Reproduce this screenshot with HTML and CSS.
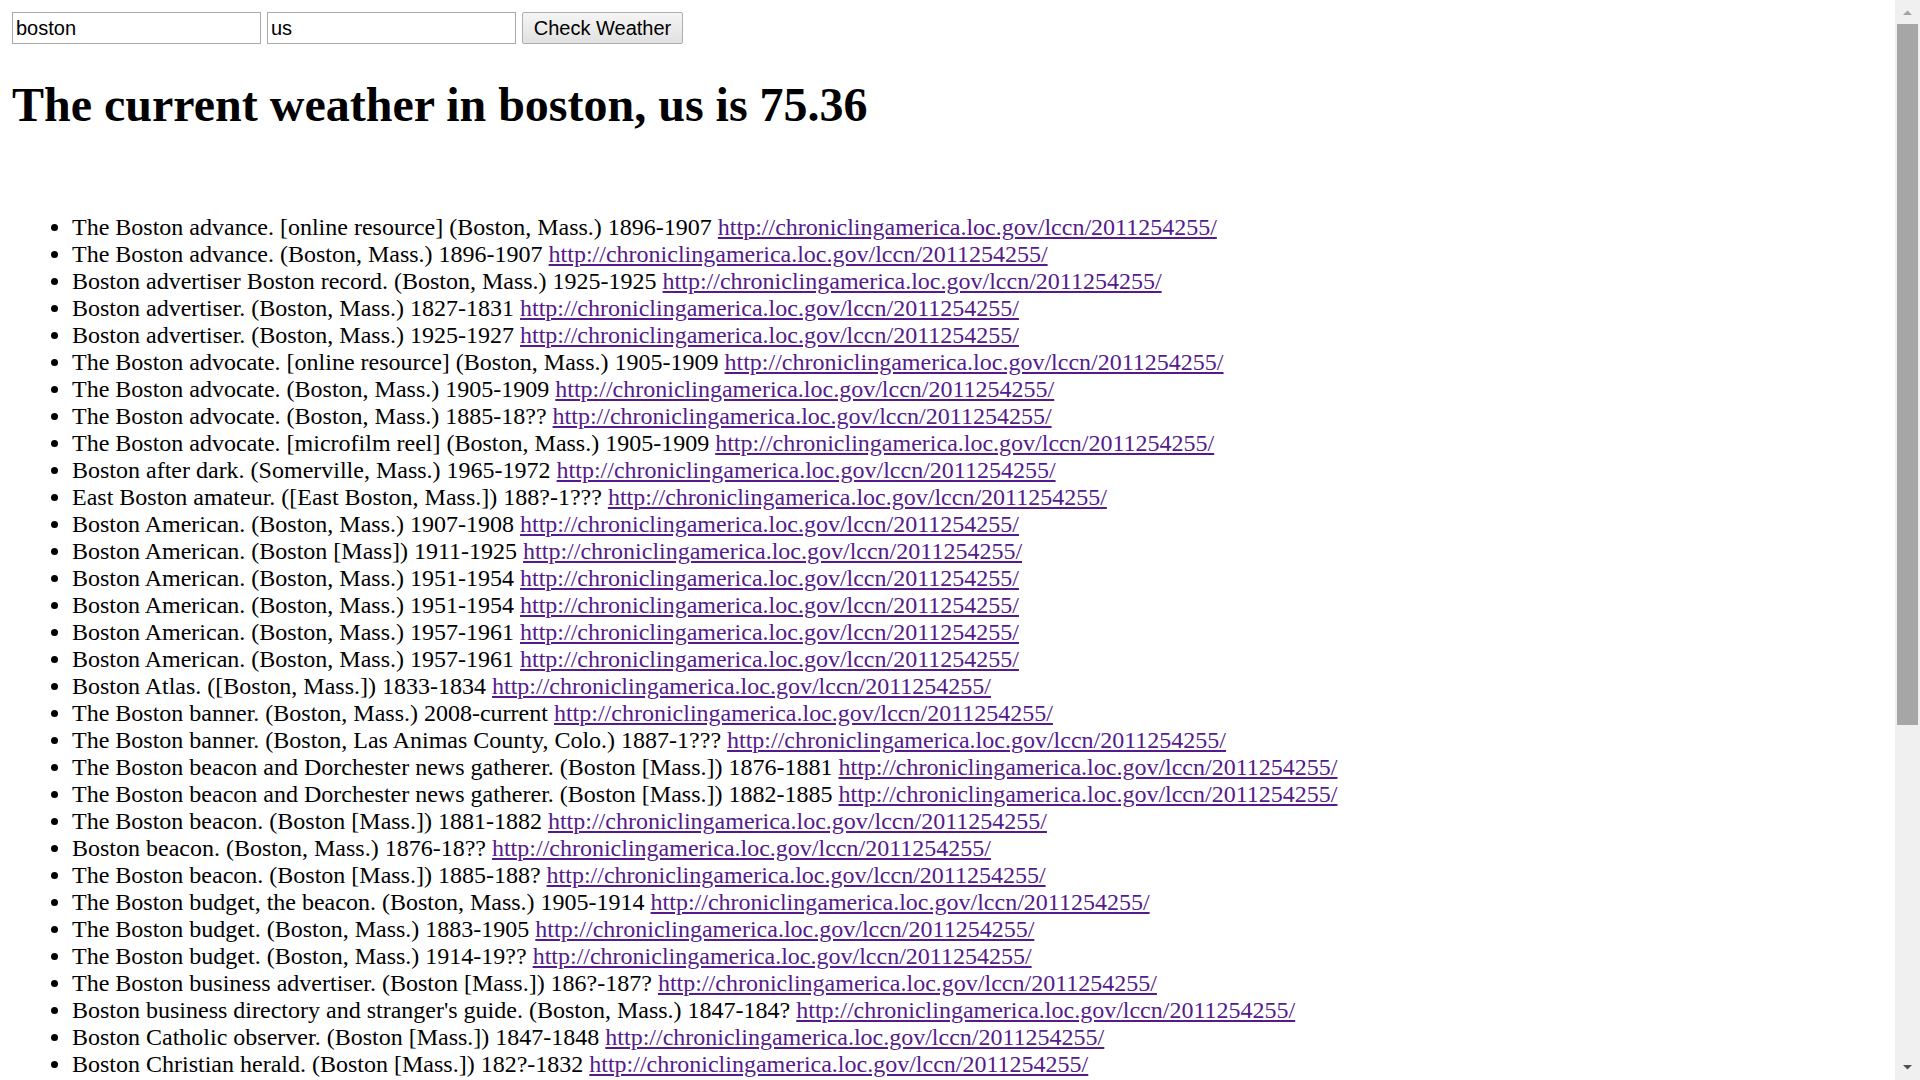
FILE: index.html
```html
<!DOCTYPE html>
<html lang="en">
<head>
<meta charset="utf-8">
<title>Weather</title>
<link rel="stylesheet" href="styles.css">
</head>
<body>
<form class="search-form">
  <input class="field" type="text" value="boston">
  <input class="field" type="text" value="us">
  <button class="btn" type="button">Check Weather</button>
</form>
<h1 class="title">The current weather in boston, us is 75.36</h1>
<ul class="results">
  <li>The Boston advance. [online resource] (Boston, Mass.) 1896-1907 <a class="link" href="#">http://chroniclingamerica.loc.gov/lccn/2011254255/</a></li>
  <li>The Boston advance. (Boston, Mass.) 1896-1907 <a class="link" href="#">http://chroniclingamerica.loc.gov/lccn/2011254255/</a></li>
  <li>Boston advertiser Boston record. (Boston, Mass.) 1925-1925 <a class="link" href="#">http://chroniclingamerica.loc.gov/lccn/2011254255/</a></li>
  <li>Boston advertiser. (Boston, Mass.) 1827-1831 <a class="link" href="#">http://chroniclingamerica.loc.gov/lccn/2011254255/</a></li>
  <li>Boston advertiser. (Boston, Mass.) 1925-1927 <a class="link" href="#">http://chroniclingamerica.loc.gov/lccn/2011254255/</a></li>
  <li>The Boston advocate. [online resource] (Boston, Mass.) 1905-1909 <a class="link" href="#">http://chroniclingamerica.loc.gov/lccn/2011254255/</a></li>
  <li>The Boston advocate. (Boston, Mass.) 1905-1909 <a class="link" href="#">http://chroniclingamerica.loc.gov/lccn/2011254255/</a></li>
  <li>The Boston advocate. (Boston, Mass.) 1885-18?? <a class="link" href="#">http://chroniclingamerica.loc.gov/lccn/2011254255/</a></li>
  <li>The Boston advocate. [microfilm reel] (Boston, Mass.) 1905-1909 <a class="link" href="#">http://chroniclingamerica.loc.gov/lccn/2011254255/</a></li>
  <li>Boston after dark. (Somerville, Mass.) 1965-1972 <a class="link" href="#">http://chroniclingamerica.loc.gov/lccn/2011254255/</a></li>
  <li>East Boston amateur. ([East Boston, Mass.]) 188?-1??? <a class="link" href="#">http://chroniclingamerica.loc.gov/lccn/2011254255/</a></li>
  <li>Boston American. (Boston, Mass.) 1907-1908 <a class="link" href="#">http://chroniclingamerica.loc.gov/lccn/2011254255/</a></li>
  <li>Boston American. (Boston [Mass]) 1911-1925 <a class="link" href="#">http://chroniclingamerica.loc.gov/lccn/2011254255/</a></li>
  <li>Boston American. (Boston, Mass.) 1951-1954 <a class="link" href="#">http://chroniclingamerica.loc.gov/lccn/2011254255/</a></li>
  <li>Boston American. (Boston, Mass.) 1951-1954 <a class="link" href="#">http://chroniclingamerica.loc.gov/lccn/2011254255/</a></li>
  <li>Boston American. (Boston, Mass.) 1957-1961 <a class="link" href="#">http://chroniclingamerica.loc.gov/lccn/2011254255/</a></li>
  <li>Boston American. (Boston, Mass.) 1957-1961 <a class="link" href="#">http://chroniclingamerica.loc.gov/lccn/2011254255/</a></li>
  <li>Boston Atlas. ([Boston, Mass.]) 1833-1834 <a class="link" href="#">http://chroniclingamerica.loc.gov/lccn/2011254255/</a></li>
  <li>The Boston banner. (Boston, Mass.) 2008-current <a class="link" href="#">http://chroniclingamerica.loc.gov/lccn/2011254255/</a></li>
  <li>The Boston banner. (Boston, Las Animas County, Colo.) 1887-1??? <a class="link" href="#">http://chroniclingamerica.loc.gov/lccn/2011254255/</a></li>
  <li>The Boston beacon and Dorchester news gatherer. (Boston [Mass.]) 1876-1881 <a class="link" href="#">http://chroniclingamerica.loc.gov/lccn/2011254255/</a></li>
  <li>The Boston beacon and Dorchester news gatherer. (Boston [Mass.]) 1882-1885 <a class="link" href="#">http://chroniclingamerica.loc.gov/lccn/2011254255/</a></li>
  <li>The Boston beacon. (Boston [Mass.]) 1881-1882 <a class="link" href="#">http://chroniclingamerica.loc.gov/lccn/2011254255/</a></li>
  <li>Boston beacon. (Boston, Mass.) 1876-18?? <a class="link" href="#">http://chroniclingamerica.loc.gov/lccn/2011254255/</a></li>
  <li>The Boston beacon. (Boston [Mass.]) 1885-188? <a class="link" href="#">http://chroniclingamerica.loc.gov/lccn/2011254255/</a></li>
  <li>The Boston budget, the beacon. (Boston, Mass.) 1905-1914 <a class="link" href="#">http://chroniclingamerica.loc.gov/lccn/2011254255/</a></li>
  <li>The Boston budget. (Boston, Mass.) 1883-1905 <a class="link" href="#">http://chroniclingamerica.loc.gov/lccn/2011254255/</a></li>
  <li>The Boston budget. (Boston, Mass.) 1914-19?? <a class="link" href="#">http://chroniclingamerica.loc.gov/lccn/2011254255/</a></li>
  <li>The Boston business advertiser. (Boston [Mass.]) 186?-187? <a class="link" href="#">http://chroniclingamerica.loc.gov/lccn/2011254255/</a></li>
  <li>Boston business directory and stranger's guide. (Boston, Mass.) 1847-184? <a class="link" href="#">http://chroniclingamerica.loc.gov/lccn/2011254255/</a></li>
  <li>Boston Catholic observer. (Boston [Mass.]) 1847-1848 <a class="link" href="#">http://chroniclingamerica.loc.gov/lccn/2011254255/</a></li>
  <li>Boston Christian herald. (Boston [Mass.]) 182?-1832 <a class="link" href="#">http://chroniclingamerica.loc.gov/lccn/2011254255/</a></li>
</ul>
<div class="scrollbar" aria-hidden="true">
  <div class="sb-button">
    <svg width="25" height="24" viewBox="0 0 25 24"><path d="M8 15 L12.5 10.5 L17 15 Z" fill="#a3a3a3"/></svg>
  </div>
  <div class="sb-track">
    <div class="sb-thumb"></div>
  </div>
  <div class="sb-button">
    <svg width="25" height="24" viewBox="0 0 25 24"><path d="M8 9 L12.5 13.5 L17 9 Z" fill="#505050"/></svg>
  </div>
</div>
</body>
</html>
```

FILE: styles.css
```css
html {
  background: #fff;
}

body {
  margin: 12px;
  font-family: "Liberation Serif", "Times New Roman", serif;
  font-size: 24px;
  color: #000;
}

.search-form {
  display: flex;
  align-items: flex-start;
  gap: 6px;
  height: 33px;
  margin: 0;
}

.field {
  box-sizing: border-box;
  width: 249px;
  height: 32px;
  margin: 0;
  padding: 0 3px;
  border: 1px solid #a9a9a9;
  border-radius: 0;
  background: #fff;
  color: #000;
  font-family: "Liberation Sans", Arial, sans-serif;
  font-size: 20px;
  outline: none;
}

.btn {
  box-sizing: border-box;
  width: 161px;
  height: 32px;
  margin: 0;
  padding: 0;
  border: 1px solid #adadad;
  border-radius: 2px;
  background: linear-gradient(#f5f5f5, #e1e1e1);
  color: #000;
  font-family: "Liberation Sans", Arial, sans-serif;
  font-size: 20px;
}

.title {
  margin: 32px 0;
  font-size: 48px;
  font-weight: bold;
  line-height: 55px;
}

.results {
  margin: 82px 0 24px;
  padding-left: 60px;
  padding-right: 25px;
  list-style: disc;
}

.results li {
  line-height: 27px;
}

.link {
  color: #551a8b;
  text-decoration: underline;
}

.scrollbar {
  position: fixed;
  top: 0;
  right: 0;
  width: 25px;
  height: 100vh;
  display: flex;
  flex-direction: column;
  background: #f0f0f0;
}

.sb-button {
  height: 24px;
  flex: none;
}

.sb-button svg {
  display: block;
}

.sb-track {
  flex: 1;
  padding: 0 2px;
}

.sb-thumb {
  height: 701px;
  background: #a6a6a6;
}
```
